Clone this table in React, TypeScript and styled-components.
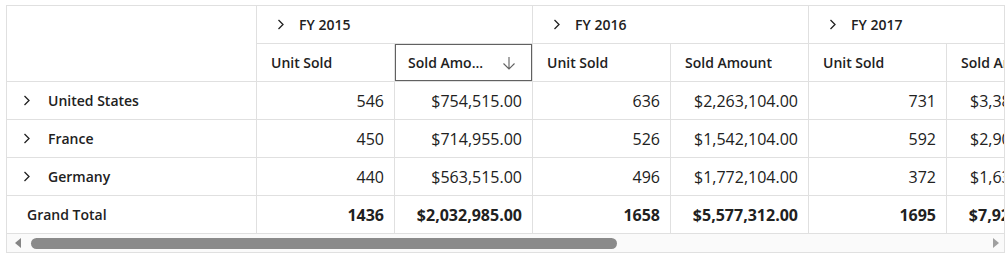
import React from "react";
import styled, {createGlobalStyle} from "styled-components";

const GlobalStyle = createGlobalStyle`
  body {
    margin: 0;
    background: #fff;
    font-family: "Open Sans", "Noto Sans", sans-serif;
    color: #212121;
  }
`;

const Page = styled.div`
  padding: 5px 0 0 6px;
`;

const PivotFrame = styled.div`
  width: 999px;
  box-sizing: border-box;
  border: 1px solid #e0e0e0;
  background: #fff;
`;

const Viewport = styled.div`
  overflow: hidden;
`;

const Grid = styled.div`
  display: grid;
  grid-template-columns: 250px repeat(8, 138px);
  grid-auto-rows: 38px;
  width: max-content;
`;

const Cell = styled.div<{$span?: number; $rows?: number}>`
  box-sizing: border-box;
  display: flex;
  align-items: center;
  grid-column: span ${p => p.$span || 1};
  grid-row: span ${p => p.$rows || 1};
  border-right: 1px solid #e0e0e0;
  border-bottom: 1px solid #e0e0e0;
  white-space: nowrap;
  overflow: hidden;
`;

const YearCell = styled(Cell)`
  padding-left: 20px;
  font-size: 14px;
  font-weight: 600;
`;

const MeasureCell = styled(Cell)<{$sorted?: boolean}>`
  padding: 0 16px 0 14px;
  font-size: 14px;
  font-weight: 600;
  justify-content: space-between;
  gap: 8px;
  ${p => p.$sorted && `
    padding-left: 13px;
    box-shadow: inset 0 0 0 1px #616161;
  `}
`;

const MeasureText = styled.span`
  overflow: hidden;
  text-overflow: ellipsis;
`;

const RowHead = styled(Cell)<{$total?: boolean}>`
  padding-left: ${p => p.$total ? "20px" : "16px"};
  font-size: 14px;
  font-weight: 600;
`;

const ValueCell = styled(Cell)<{$total?: boolean}>`
  justify-content: flex-end;
  padding-right: 10px;
  font-size: 16px;
  font-weight: ${p => p.$total ? 700 : 400};
`;

const Chevron = styled.svg<{$gap: number}>`
  width: 8px;
  height: 11px;
  flex: none;
  margin-right: ${p => p.$gap}px;
`;

const ScrollBar = styled.div`
  display: flex;
  align-items: center;
  height: 18px;
  padding: 0 5px 0 8px;
  background: #fafafa;
`;

const ScrollTrack = styled.div`
  flex: 1;
  display: flex;
  padding: 0 10px;
`;

const ScrollThumb = styled.div`
  height: 11px;
  width: 586px;
  border-radius: 6px;
  background: #8a8a8a;
`;

const Arrow = styled.svg`
  width: 6px;
  height: 10px;
  flex: none;
`;

type YearData = {year: string; rows: [number, string][]; total: [number, string]};

const years: YearData[] = [
  {
    year: "FY 2015",
    rows: [[546, "$754,515.00"], [450, "$714,955.00"], [440, "$563,515.00"]],
    total: [1436, "$2,032,985.00"],
  },
  {
    year: "FY 2016",
    rows: [[636, "$2,263,104.00"], [526, "$1,542,104.00"], [496, "$1,772,104.00"]],
    total: [1658, "$5,577,312.00"],
  },
  {
    year: "FY 2017",
    rows: [[731, "$3,386,104.00"], [592, "$2,904,104.00"], [372, "$1,634,104.00"]],
    total: [1695, "$7,924,312.00"],
  },
  {
    year: "FY 2018",
    rows: [[614, "$2,744,208.00"], [563, "$2,351,006.00"], [438, "$1,905,512.00"]],
    total: [1615, "$7,000,726.00"],
  },
];

const countries = ["United States", "France", "Germany"];

function ChevronRight({gap}: {gap: number}) {
  return (
    <Chevron $gap={gap} viewBox="0 0 8 11">
      <path d="M1.5 1 L6 5.5 L1.5 10" fill="none" stroke="#212121" strokeWidth="1.3" />
    </Chevron>
  );
}

function SortDown() {
  return (
    <svg width="14" height="14" viewBox="0 0 14 14" style={{flex: "none"}}>
      <path d="M7 1 V13 M1.5 7.5 L7 13 L12.5 7.5" fill="none" stroke="#616161" strokeWidth="1.1" />
    </svg>
  );
}

export default function App() {
  return (
    <Page>
      <GlobalStyle />
      <PivotFrame>
        <Viewport>
          <Grid>
            <Cell $rows={2} />
            {years.map(y => (
              <YearCell key={y.year} $span={2}>
                <ChevronRight gap={14} />
                {y.year}
              </YearCell>
            ))}
            {years.map((y, i) => (
              <React.Fragment key={y.year}>
                <MeasureCell><MeasureText>Unit Sold</MeasureText></MeasureCell>
                {i === 0 ? (
                  <MeasureCell $sorted>
                    <MeasureText>Sold Amo...</MeasureText>
                    <SortDown />
                  </MeasureCell>
                ) : (
                  <MeasureCell><MeasureText>Sold Amount</MeasureText></MeasureCell>
                )}
              </React.Fragment>
            ))}
            {countries.map((c, r) => (
              <React.Fragment key={c}>
                <RowHead>
                  <ChevronRight gap={17} />
                  {c}
                </RowHead>
                {years.map(y => (
                  <React.Fragment key={y.year}>
                    <ValueCell>{y.rows[r][0]}</ValueCell>
                    <ValueCell>{y.rows[r][1]}</ValueCell>
                  </React.Fragment>
                ))}
              </React.Fragment>
            ))}
            <RowHead $total>Grand Total</RowHead>
            {years.map(y => (
              <React.Fragment key={y.year}>
                <ValueCell $total>{y.total[0]}</ValueCell>
                <ValueCell $total>{y.total[1]}</ValueCell>
              </React.Fragment>
            ))}
          </Grid>
        </Viewport>
        <ScrollBar>
          <Arrow viewBox="0 0 6 10"><path d="M6 0 L0 5 L6 10 Z" fill="#858585" /></Arrow>
          <ScrollTrack><ScrollThumb /></ScrollTrack>
          <Arrow viewBox="0 0 6 10"><path d="M0 0 L6 5 L0 10 Z" fill="#a0a0a0" /></Arrow>
        </ScrollBar>
      </PivotFrame>
    </Page>
  );
}
